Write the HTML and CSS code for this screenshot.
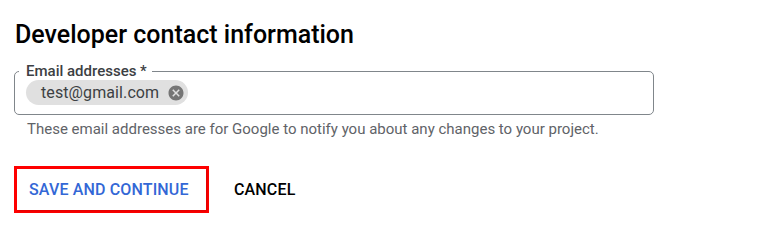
FILE: index.html
```html
<!DOCTYPE html>
<html>
<head>
<meta charset="utf-8">
<link rel="stylesheet" href="styles.css">
</head>
<body>
<div class="page">
  <h2 class="title">Developer contact information</h2>
  <fieldset class="field">
    <legend class="label">Email addresses *</legend>
    <div class="chips">
      <span class="chip">
        <span class="chip-text">test@gmail.com</span>
        <svg class="chip-x" width="18" height="18" viewBox="0 0 24 24"><path fill="#757575" d="M12 2C6.47 2 2 6.47 2 12s4.47 10 10 10 10-4.47 10-10S17.53 2 12 2zm5 13.59L15.59 17 12 13.41 8.41 17 7 15.59 10.59 12 7 8.41 8.41 7 12 10.59 15.59 7 17 8.41 13.41 12 17 15.59z"/></svg>
      </span>
    </div>
  </fieldset>
  <div class="hint">These email addresses are for Google to notify you about any changes to your project.</div>
  <div class="actions">
    <div class="highlight"><button class="btn btn-primary">SAVE AND CONTINUE</button></div>
    <button class="btn btn-plain">CANCEL</button>
  </div>
</div>
</body>
</html>
```
FILE: styles.css
```css
html, body { margin: 0; padding: 0; background: #fff; }
body { font-family: Roboto, "Noto Sans", Arial, sans-serif; color: #202124; }
.page { padding: 19px 0 0 14px; width: 640px; }
.title {
  margin: 0 0 0 1px;
  font-size: 25px;
  font-weight: 500;
  line-height: 32px;
  color: #000;
}
.field {
  margin: 12px 0 0 0;
  padding: 0 11px 9px 4px;
  border: 1px solid #80868b;
  border-radius: 5px;
  min-width: 0;
}
.label {
  padding: 0 5px 0 7px;
  font-size: 15px;
  font-weight: 500;
  color: #3c4043;
  line-height: 16px;
}
.chips { display: flex; margin: 1px 0 0 7px; }
.chip {
  display: inline-flex;
  align-items: center;
  height: 25px;
  padding: 0 3px 0 15px;
  border-radius: 13px;
  background: #e0e0e0;
  font-size: 16px;
  color: #3c4043;
}
.chip-text { margin-right: 8px; letter-spacing: 0.1px; }
.chip-x { display: block; }
.hint {
  margin: 4px 0 0 13px;
  font-size: 15px;
  line-height: 20px;
  color: #5f6368;
}
.actions {
  display: flex;
  align-items: center;
  margin-top: 27px;
  gap: 17px;
}
.highlight {
  border: 3px solid #f00;
}
.btn {
  font-family: Roboto, Arial, sans-serif;
  font-size: 16px;
  font-weight: 500;
  letter-spacing: 0.15px;
  border: none;
  background: #fff;
  height: 41px;
  cursor: pointer;
}
.btn-primary {
  display: block;
  color: #3367d6;
  padding: 0 0 0 12px;
  width: 189px;
  text-align: left;
  box-shadow: 1px 1px 2px rgba(0,0,0,0.15);
}
.btn-plain { color: #000; padding: 0 8px; }
```
